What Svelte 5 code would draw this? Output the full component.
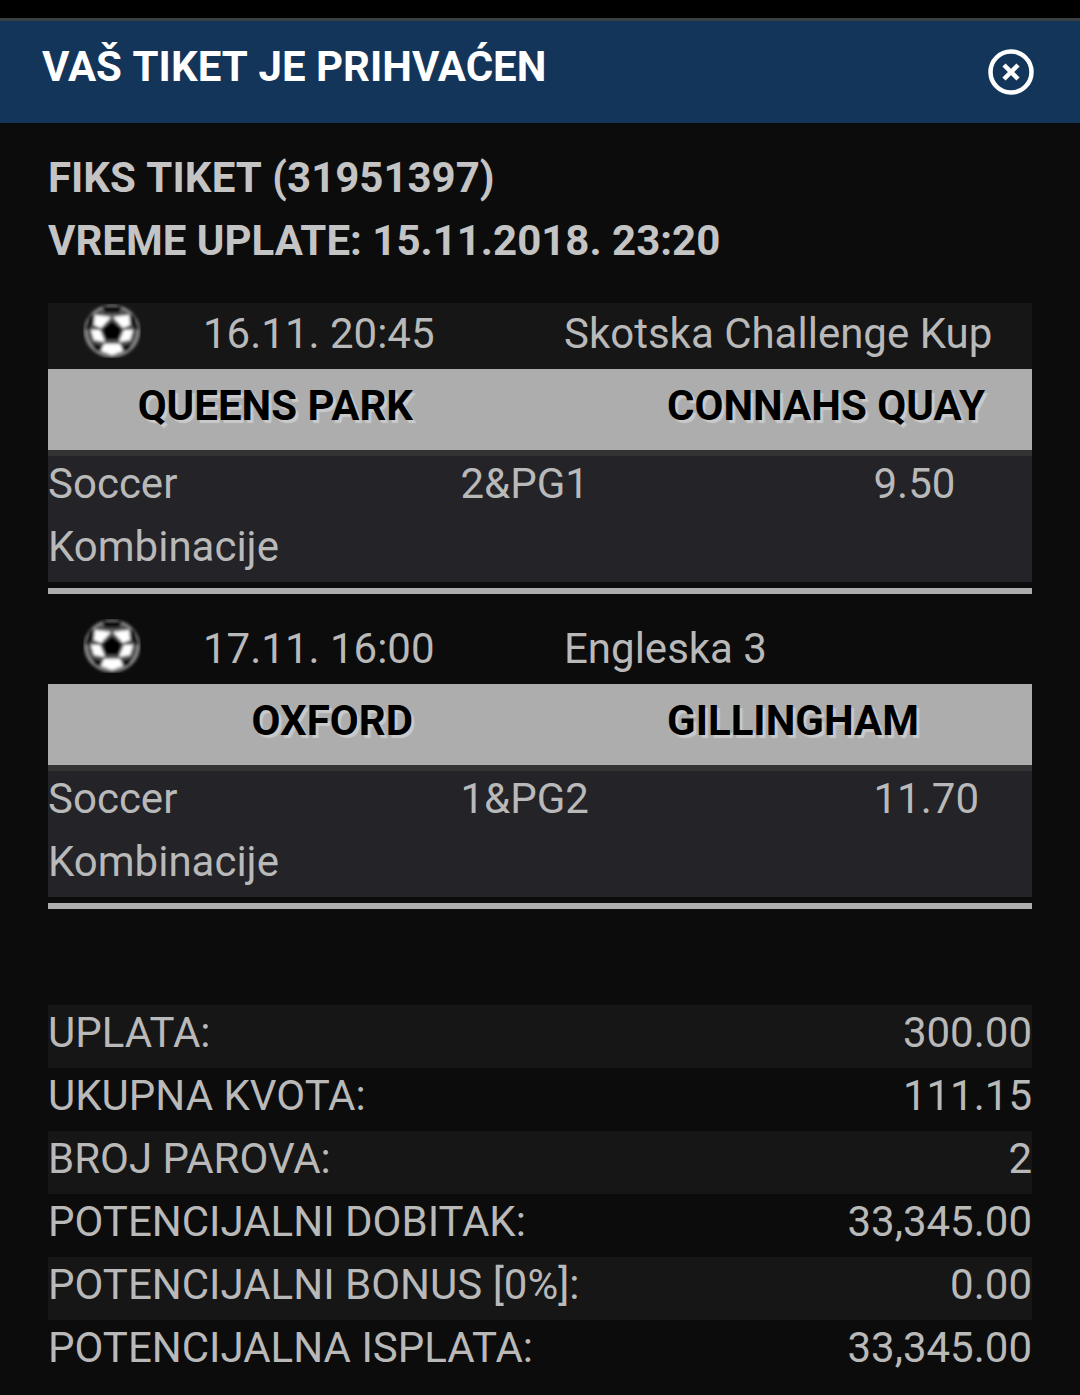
<script>
  const events = [
    { date: '16.11. 20:45', league: 'Skotska Challenge Kup', home: 'QUEENS PARK', away: 'CONNAHS QUAY', pick: '2&PG1', odd: '9.50', striped: true },
    { date: '17.11. 16:00', league: 'Engleska 3', home: 'OXFORD', away: 'GILLINGHAM', pick: '1&PG2', odd: '11.70', striped: false }
  ];

  const totals = [
    ['UPLATA:', '300.00'],
    ['UKUPNA KVOTA:', '111.15'],
    ['BROJ PAROVA:', '2'],
    ['POTENCIJALNI DOBITAK:', '33,345.00'],
    ['POTENCIJALNI BONUS [0%]:', '0.00'],
    ['POTENCIJALNA ISPLATA:', '33,345.00']
  ];
</script>

<div class="page">
  <header class="head">
    <h1>VAŠ <span class="wide">TIKET</span> JE PRIHVAĆEN</h1>
    <svg class="close" width="46" height="46" viewBox="0 0 46 46">
      <circle cx="23" cy="23" r="20.5" fill="none" stroke="#fff" stroke-width="4.5" />
      <path d="M16 16 L30 30 M30 16 L16 30" stroke="#fff" stroke-width="4.5" fill="none" />
    </svg>
  </header>

  <main class="body">
    <div class="info">
      <div>FIKS <span class="wide">TIKET</span> (31951397)</div>
      <div>VREME UPLATE: 15.11.2018. 23:20</div>
    </div>

    {#each events as ev}
      <section class="event">
        <div class="meta" class:striped={ev.striped}>
          <div class="ball-cell">
            <svg class="ball" width="58" height="54" viewBox="0 0 58 54">
              <defs>
                <filter id="soft" x="-10%" y="-10%" width="120%" height="120%">
                  <feGaussianBlur stdDeviation="1.4" />
                </filter>
              </defs>
              <g filter="url(#soft)">
                <ellipse cx="29" cy="27" rx="28" ry="26.5" fill="#8c8c8c" />
                <ellipse cx="29" cy="27" rx="25" ry="24" fill="#555" />
                <path d="M12 11 L28 13 L18 24 L11 21 Z M46 11 L30 13 L40 24 L47 21 Z" fill="#fff" />
                <path d="M8 26 L17 26 L22 38 L11 36 Z M50 26 L41 26 L36 38 L47 36 Z" fill="#fff" />
                <path d="M21 40 L37 40 L40 47 L29 51 L18 47 Z" fill="#fff" />
                <path d="M19 2 L39 2 L36 9 L22 9 Z" fill="#0c0c0c" />
                <path d="M29 17 L39 25 L35 36 L23 36 L19 25 Z" fill="#000" />
                <path d="M6 13 L10 9 L10 19 L6 26 L2 25 Z" fill="#0c0c0c" />
                <path d="M52 13 L48 9 L48 19 L52 26 L56 25 Z" fill="#0c0c0c" />
                <path d="M9 39 L19 42 L17 47 L12 46 Z" fill="#0c0c0c" />
                <path d="M49 39 L39 42 L41 47 L46 46 Z" fill="#0c0c0c" />
              </g>
            </svg>
          </div>
          <div class="date">{ev.date}</div>
          <div>{ev.league}</div>
        </div>
        <div class="teams">
          <div class="home">{ev.home}</div>
          <div class="away">{ev.away}</div>
        </div>
        <div class="bet">
          <div class="market">Soccer Kombinacije</div>
          <div>{ev.pick}</div>
          <div>{ev.odd}</div>
        </div>
        <div class="rule"></div>
      </section>
    {/each}

    <div class="totals">
      {#each totals as [label, value]}
        <div class="total">
          <span>{label}</span>
          <span>{value}</span>
        </div>
      {/each}
    </div>
  </main>
</div>

<style>
  :global(body) {
    background: #0c0c0c;
  }

  .page {
    height: 1395px;
    overflow: hidden;
    background: #0c0c0c;
    font-family: Roboto, sans-serif;
    font-size: 42px;
    line-height: 63px;
    color: #b9b9b9;
  }

  .head {
    display: flex;
    justify-content: space-between;
    height: 105px;
    padding: 0 46px 0 42px;
    background: #14355a;
    border-top: 18px solid #000;
    position: relative;
  }

  /* thin grey edge along the top of the dialog */
  .head::before {
    content: '';
    position: absolute;
    left: 0;
    right: 0;
    top: 0;
    height: 3px;
    background: #3a3f45;
  }

  h1 {
    margin: 0;
    padding-top: 17px;
    font-size: 42px;
    line-height: 63px;
    font-weight: 700;
    color: #fff;
  }

  .wide {
    letter-spacing: 0.1px;
  }

  .close {
    margin-top: 31px;
  }

  .body {
    padding: 23px 48px 0;
  }

  .info {
    margin-bottom: 31px;
    font-weight: 700;
    color: #c4c4c4;
  }

  .event {
    margin-bottom: 24px;
  }

  .meta {
    display: grid;
    grid-template-columns: 155px 361px 1fr;
    height: 66px;
    line-height: 61px;
  }

  .striped {
    background: #161616;
  }

  .ball-cell {
    padding: 1px 0 0 35px;
    line-height: 0;
  }

  .teams {
    display: flex;
    height: 81px;
    background: #adadad;
    color: #000;
    font-weight: 700;
    line-height: 74px;
    text-shadow: 3px 3px 1px #cacaca;
  }

  .home {
    width: 365px;
    text-align: right;
  }

  .away {
    margin-left: 254px;
  }

  .bet {
    display: grid;
    grid-template-columns: 412.5px 413px 158.5px;
    height: 126px;
    background: #232328;
    border-top: 6px solid #333;
  }

  .bet > div {
    margin-top: -4px;
  }

  .market {
    width: 260px;
  }

  .rule {
    height: 6px;
    margin-top: 6px;
    background: #adadad;
  }

  .totals {
    margin-top: 96px;
  }

  .total {
    display: flex;
    justify-content: space-between;
    height: 63px;
    line-height: 55px;
  }

  .total:nth-child(odd) {
    background: #161616;
  }
</style>
